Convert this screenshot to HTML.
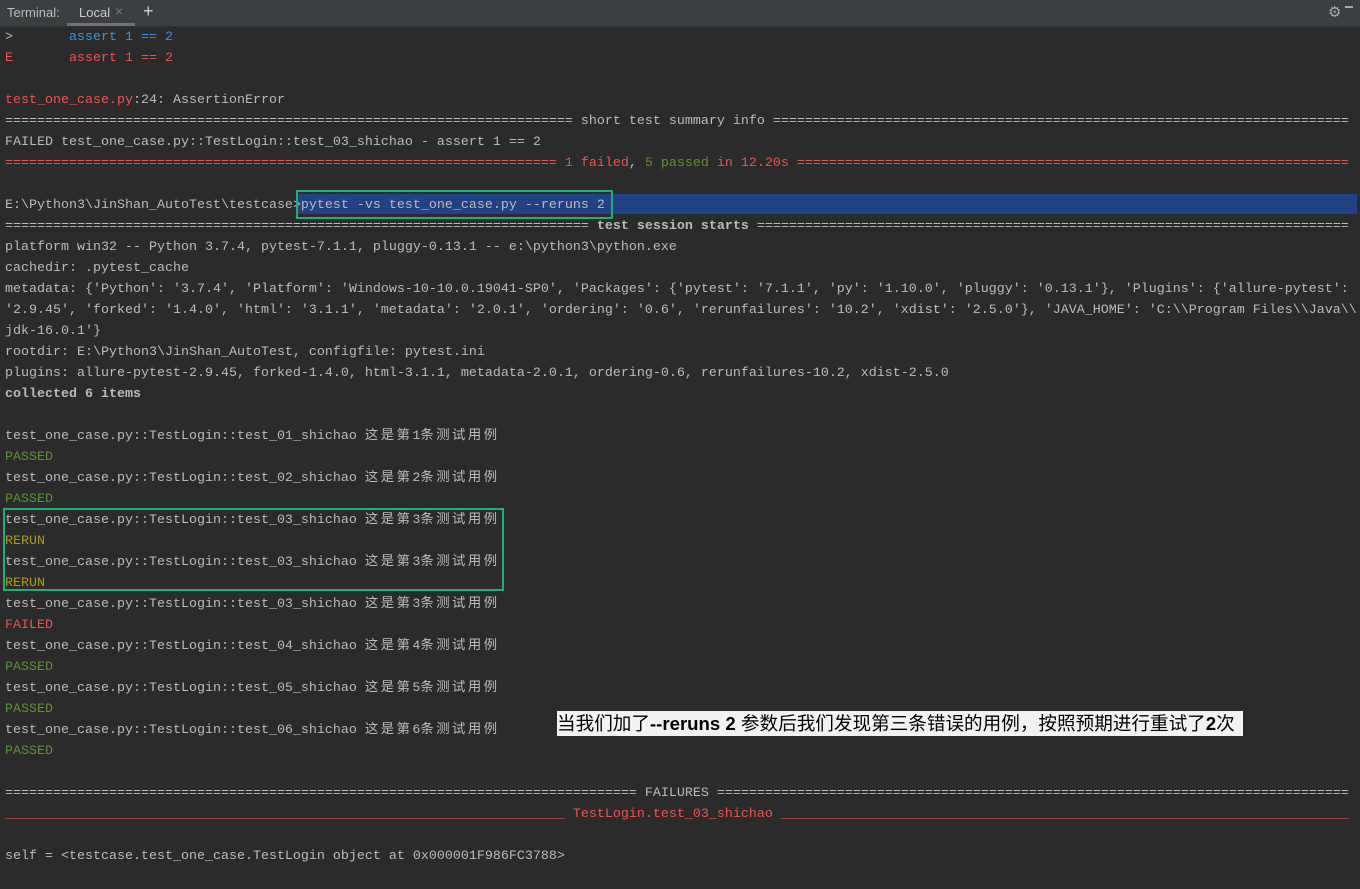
<!DOCTYPE html>
<html><head><meta charset="utf-8"><style>
body{margin:0;width:1360px;height:889px;background:#2b2b2b;overflow:hidden;position:relative;font-family:"Liberation Mono","Noto Sans CJK SC",monospace;font-size:13.33px;color:#bbbbbb}
#tab{position:absolute;left:0;top:0;width:1360px;height:26px;background:#3c3f41;border-bottom:1px solid #323232;font-family:"Liberation Sans",sans-serif;font-size:13px}
.l{position:absolute;left:5px;height:21px;line-height:21px;white-space:pre}
.r{color:#f0524f}.b{color:#3592e8}.g{color:#5d9232}.y{color:#a89d1c}.w{color:#bbbbbb}
.c{letter-spacing:2.5px}
</style></head><body>
<div id="tab">
<span style="position:absolute;left:7px;top:5px;color:#bbb">Terminal:</span>
<span style="position:absolute;left:79px;top:5px;color:#ccc">Local</span>
<span style="position:absolute;left:115px;top:3px;color:#777;font-size:14px">×</span>
<div style="position:absolute;left:67px;top:23px;width:68px;height:3px;background:#6f7377"></div>
<span style="position:absolute;left:143px;top:1px;color:#ccc;font-size:18px">+</span>
<span style="position:absolute;left:1328px;top:3px;color:#aaa;font-size:15px">⚙</span>
<span style="position:absolute;left:1345px;top:6px;width:8px;height:2px;background:#aaa"></span>
</div>
<div style="position:absolute;left:297px;top:194px;width:1060px;height:20px;background:#214283"></div>
<div id="t"></div>
<div style="position:absolute;left:296px;top:190px;width:313px;height:25px;border:2px solid #1fae74"></div>
<div style="position:absolute;left:3px;top:508px;width:497px;height:79px;border:2px solid #1fae74"></div>
<div style="position:absolute;left:557px;top:711px;width:686px;height:25px;background:#f2f2f2;color:#000;font-family:'Liberation Sans','Noto Sans CJK SC',sans-serif;font-size:18.6px;line-height:25px;white-space:nowrap;overflow:hidden">当我们加了<b>--reruns 2</b> 参数后我们发现第三条错误的用例，按照预期进行重试了<b>2</b>次</div>
<script>
const E=n=>'='.repeat(n),U=n=>'_'.repeat(n);
const cn=s=>'<span class="c">'+s+'</span>';
const tc=n=>'test_one_case.py::TestLogin::test_0'+n+'_shichao '+cn('这是第')+n+cn('条测试用例');
const L=[
'<span class="w">&gt;</span>       <span class="b">assert 1 == 2</span>',
'<span class="r">E       assert 1 == 2</span>',
'',
'<span class="r">test_one_case.py</span>:24: AssertionError',
E(71)+' short test summary info '+E(72),
'FAILED test_one_case.py::TestLogin::test_03_shichao - assert 1 == 2',
'<span class="r">'+E(69)+' 1 failed</span>, <span class="g">5 passed</span><span class="r"> in 12.20s '+E(69)+'</span>',
'',
'E:\\Python3\\JinShan_AutoTest\\testcase&gt;pytest -vs test_one_case.py --reruns 2',
E(73)+' <b>test session starts</b> '+E(74),
'platform win32 -- Python 3.7.4, pytest-7.1.1, pluggy-0.13.1 -- e:\\python3\\python.exe',
'cachedir: .pytest_cache',
"metadata: {'Python': '3.7.4', 'Platform': 'Windows-10-10.0.19041-SP0', 'Packages': {'pytest': '7.1.1', 'py': '1.10.0', 'pluggy': '0.13.1'}, 'Plugins': {'allure-pytest':",
"'2.9.45', 'forked': '1.4.0', 'html': '3.1.1', 'metadata': '2.0.1', 'ordering': '0.6', 'rerunfailures': '10.2', 'xdist': '2.5.0'}, 'JAVA_HOME': 'C:\\\\Program Files\\\\Java\\\\",
"jdk-16.0.1'}",
'rootdir: E:\\Python3\\JinShan_AutoTest, configfile: pytest.ini',
'plugins: allure-pytest-2.9.45, forked-1.4.0, html-3.1.1, metadata-2.0.1, ordering-0.6, rerunfailures-10.2, xdist-2.5.0',
'<b>collected 6 items</b>',
'',
tc(1),'<span class="g">PASSED</span>',
tc(2),'<span class="g">PASSED</span>',
tc(3),'<span class="y">RERUN</span>',
tc(3),'<span class="y">RERUN</span>',
tc(3),'<span class="r">FAILED</span>',
tc(4),'<span class="g">PASSED</span>',
tc(5),'<span class="g">PASSED</span>',
tc(6),'<span class="g">PASSED</span>',
'',
E(79)+' FAILURES '+E(79),
'<span class="r">'+U(70)+' TestLogin.test_03_shichao '+U(71)+'</span>',
'',
'self = &lt;testcase.test_one_case.TestLogin object at 0x000001F986FC3788&gt;'
];
let h='';L.forEach((s,i)=>{h+='<div class="l" style="top:'+(27+21*i)+'px">'+s+'</div>'});
document.getElementById('t').innerHTML=h;
</script>
</body></html>
